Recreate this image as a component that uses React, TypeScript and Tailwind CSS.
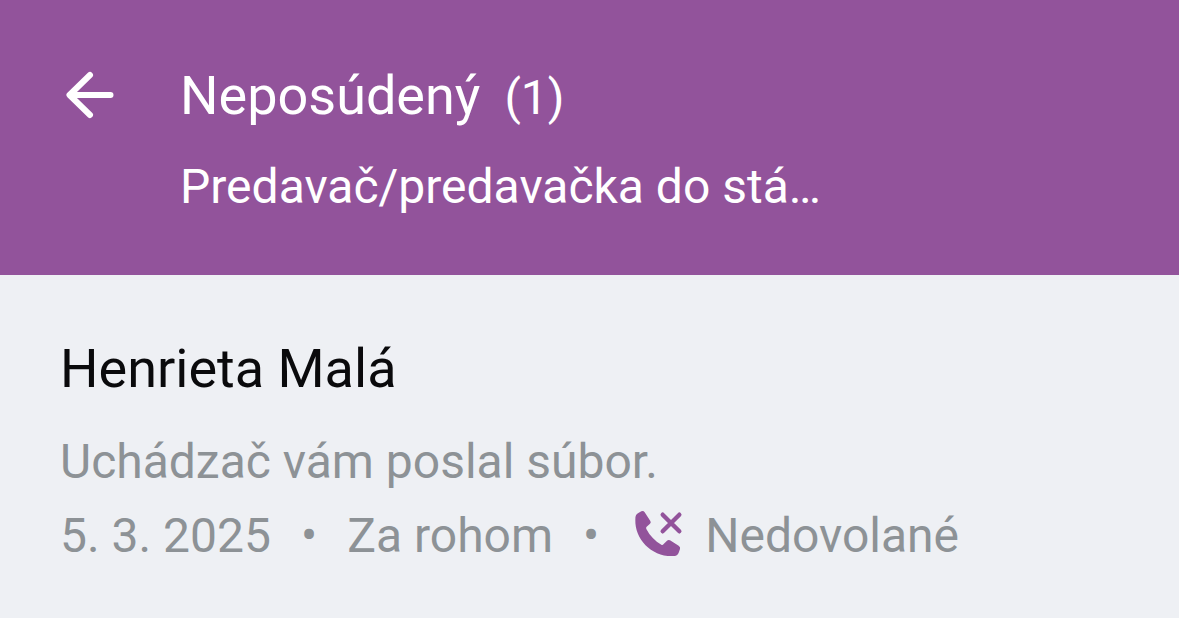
export default function App() {
  return (
    <div className="min-h-screen bg-[#eef0f4] font-['Roboto',sans-serif]">
      <header className="flex items-start gap-16 bg-[#92539b] px-16 pt-16 pb-14 text-white">
        <a href="#" aria-label="Späť" className="mt-1 block shrink-0">
          <svg width="52" height="54" viewBox="0 0 52 54" fill="none" stroke="currentColor" strokeWidth="6" strokeLinecap="round" strokeLinejoin="round">
            <path d="M26 7 L5.500 27 L26 47 M6 27 H46.500" />
          </svg>
        </a>
        <div className="min-w-0">
          <h1 className="flex items-baseline gap-6 text-[54px] leading-[64px]">
            Neposúdený <span className="text-[48px]">(1)</span>
          </h1>
          <p className="mt-6 truncate text-[48px] leading-[65px]">Predavač/predavačka do stá…</p>
        </div>
      </header>
      <main className="px-[60px] pt-[62px]">
        <h2 className="text-[54px] leading-[64px] text-[#0a0a0c]">Henrieta Malá</h2>
        <p className="mt-6 text-[48px] leading-[74px] text-[#8d9296]">Uchádzač vám poslal súbor.</p>
        <div className="flex items-center text-[48px] leading-[74px] whitespace-nowrap text-[#8d9296]">
          <span>5. 3. 2025</span>
          <span className="px-[30px]">•</span>
          <span>Za rohom</span>
          <span className="px-[30px]">•</span>
          <svg className="mr-[22px] mb-[3px] ml-1 shrink-0 text-[#92539b]" width="50" height="50" viewBox="45 33 150 150" fill="currentColor">
            <path d="M54 49Q56 44 61 42L70 37Q76 34 80 40L97 66Q100 71 96 74L86 83Q83 86 85 90C96 111 111 126 130 137Q134 139 137 135L147 125Q151 121 156 124L182 140Q188 144 186 150L182 161Q179 170 169 171C104 176 50 122 52 62Q51 55 54 49Z" />
            <path d="M134 47l50 50M184 47l-50 50" fill="none" stroke="currentColor" strokeWidth="13" strokeLinecap="round" />
          </svg>
          <span>Nedovolané</span>
        </div>
      </main>
    </div>
  );
}
